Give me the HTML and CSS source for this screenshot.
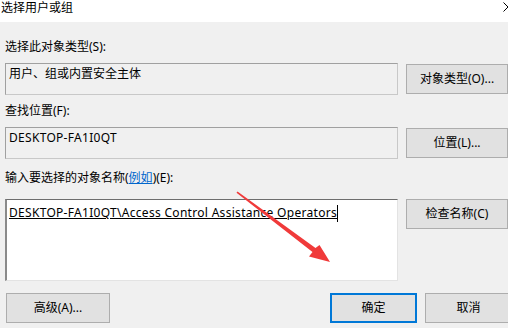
FILE: index.html
```html
<!DOCTYPE html>
<html lang="zh-CN">
<head>
  <meta charset="UTF-8">
  <title>选择用户或组</title>
  <link rel="stylesheet" href="styles.css">
</head>
<body>
  <div class="titlebar">
    <span class="title">选择用户或组</span>
    <svg class="close" width="10" height="10" viewBox="0 0 10 10">
      <path d="M0.5 0.5 L9.5 9.5 M9.5 0.5 L0.5 9.5" stroke="#000" stroke-width="1" fill="none"/>
    </svg>
  </div>

  <div class="dialog">
    <div class="label label-first">选择此对象类型(S):</div>
    <div class="row">
      <div class="field">用户、组或内置安全主体</div>
      <button class="btn btn-side">对象类型(O)...</button>
    </div>

    <div class="label">查找位置(F):</div>
    <div class="row">
      <div class="field"><span class="latin">DESKTOP-FA1I0QT</span></div>
      <button class="btn btn-side">位置(L)...</button>
    </div>

    <div class="label label-names">输入要选择的对象名称(<a href="#">例如</a>)(E):</div>
    <div class="row">
      <div class="field field-edit"><span class="latin resolved">DESKTOP-FA1I0QT\Access Control Assistance Operators</span><span class="caret"></span></div>
      <button class="btn btn-side btn-check">检查名称(C)</button>
    </div>

    <div class="actions">
      <button class="btn btn-advanced">高级(A)...</button>
      <div class="actions-right">
        <button class="btn btn-ok">确定</button>
        <button class="btn btn-cancel">取消</button>
      </div>
    </div>
  </div>

  <svg class="arrow" width="508" height="328" viewBox="0 0 508 328">
    <polygon points="237.5,191.5 315.5,248 319.5,245 330,262 309,256.5 312.5,252 236.5,192.8" fill="#f03a3a"/>
  </svg>
</body>
</html>
```

FILE: styles.css
```css
html, body {
  margin: 0;
  padding: 0;
}

body {
  width: 508px;
  height: 328px;
  overflow: hidden;
  position: relative;
  background-color: #f0f0f0;
  color: #000;
  font-family: "Noto Sans", "Noto Sans CJK SC", sans-serif;
  font-size: 12px;
  line-height: 16px;
}

.titlebar {
  height: 22px;
  background-color: #fff;
  display: flex;
  justify-content: space-between;
  align-items: flex-start;
}

.title {
  padding-left: 1px;
  line-height: 16px;
}

.close {
  margin-top: 2px;
  margin-right: -5px;
}

.dialog {
  padding-left: 5px;
}

.label {
  margin-top: 8px;
  margin-bottom: 8px;
  height: 16px;
}

.label-first {
  margin-top: 17px;
}

.label-names {
  margin-top: 11px;
  margin-bottom: 13px;
}

.label a {
  color: #0066cc;
  text-decoration: underline;
}

.row {
  display: flex;
  gap: 8px;
  align-items: flex-start;
}

.field {
  box-sizing: border-box;
  width: 395px;
  height: 32px;
  padding: 2px 3px;
  border: 1px solid #a0a0a0;
  border-right-color: #c8c8c8;
  border-bottom-color: #c8c8c8;
  white-space: nowrap;
}

.latin {
  letter-spacing: 0.3px;
}

.field-edit {
  height: 82px;
  padding-top: 5px;
  padding-left: 2px;
  background-color: #fff;
  border-top-color: #6d6d6d;
  border-left: 2px solid #8a8a8a;
  border-right-color: #e3e3e3;
  border-bottom-color: #e3e3e3;
}

.resolved {
  text-decoration: underline;
}

.caret {
  display: inline-block;
  width: 1px;
  height: 17px;
  background-color: #000;
  vertical-align: -5px;
}

.btn {
  box-sizing: border-box;
  height: 30px;
  padding: 0;
  background-color: #e1e1e1;
  border: 1px solid #adadad;
  color: #000;
  font-family: inherit;
  font-size: 12px;
  line-height: 16px;
  text-align: center;
}

.btn-side {
  width: 102px;
  margin-top: 1px;
  flex-shrink: 0;
}

.btn-check {
  margin-top: 0;
}

.actions {
  display: flex;
  justify-content: space-between;
  margin-top: 12px;
  padding-left: 1px;
}

.btn-advanced {
  width: 104px;
}

.actions-right {
  display: flex;
  gap: 8px;
  margin-right: -4px;
}

.btn-ok {
  width: 87px;
  border: 2px solid #0078d7;
}

.btn-cancel {
  width: 87px;
}

.arrow {
  position: absolute;
  left: 0;
  top: 0;
  pointer-events: none;
}
```
